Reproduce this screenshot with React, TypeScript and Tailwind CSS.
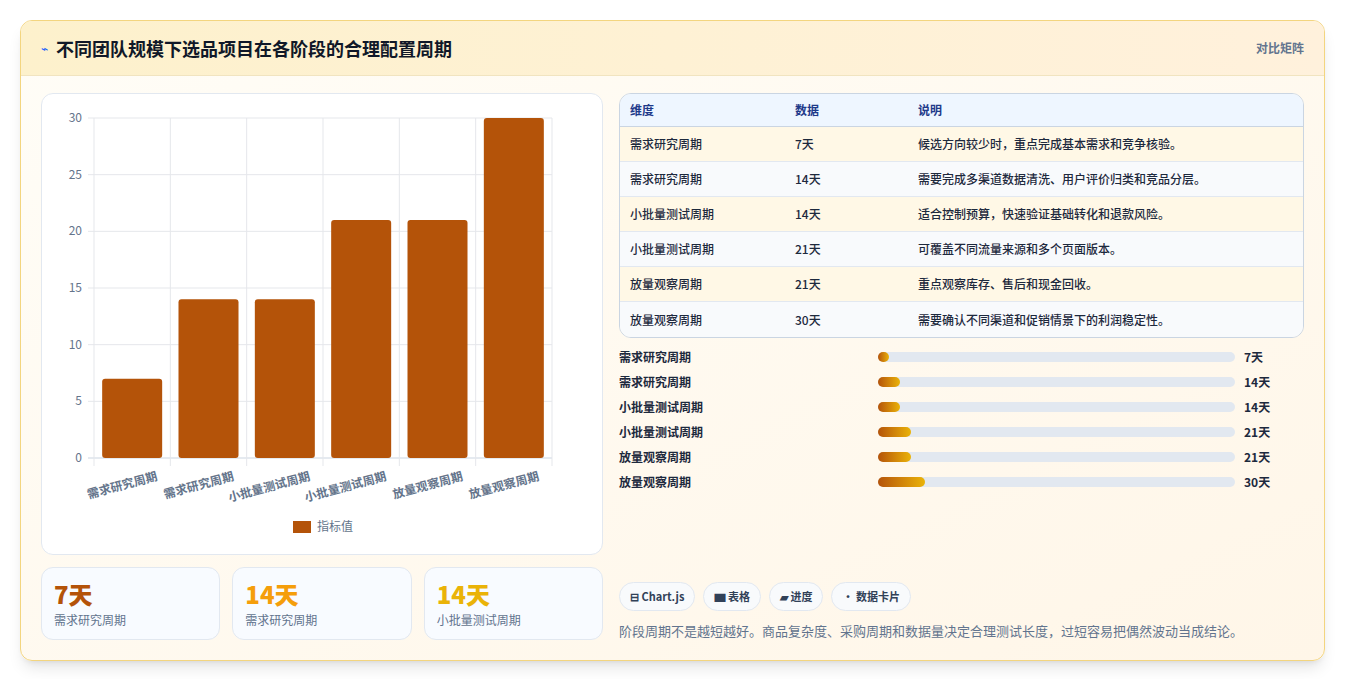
const ROWS = [
  { name: "需求研究周期", value: 7, note: "候选方向较少时，重点完成基本需求和竞争核验。" },
  { name: "需求研究周期", value: 14, note: "需要完成多渠道数据清洗、用户评价归类和竞品分层。" },
  { name: "小批量测试周期", value: 14, note: "适合控制预算，快速验证基础转化和退款风险。" },
  { name: "小批量测试周期", value: 21, note: "可覆盖不同流量来源和多个页面版本。" },
  { name: "放量观察周期", value: 21, note: "重点观察库存、售后和现金回收。" },
  { name: "放量观察周期", value: 30, note: "需要确认不同渠道和促销情景下的利润稳定性。" },
]

const FONT = { fontFamily: '"Noto Sans CJK SC", "Noto Sans", sans-serif' }

function BarChart() {
  const x0 = 52
  const x1 = 510
  const y0 = 364
  const y30 = 24
  const step = (x1 - x0) / 6
  const sy = (v: number) => y0 - ((y0 - y30) * v) / 30
  return (
    <svg width="560" height="460" style={FONT}>
      {[0, 5, 10, 15, 20, 25, 30].map((t) => (
        <g key={t}>
          <line x1={x0 - 6} x2={x1} y1={sy(t)} y2={sy(t)} stroke={t === 0 ? "#cbd5e1" : "#e5e7eb"} />
          <text x={x0 - 12} y={sy(t) + 4} textAnchor="end" fontSize="12" fill="#64748b">{t}</text>
        </g>
      ))}
      {Array.from({ length: 7 }).map((_, i) => (
        <line key={i} x1={x0 + i * step} x2={x0 + i * step} y1={y30} y2={y0 + 8} stroke="#e5e7eb" />
      ))}
      {ROWS.map((r, i) => {
        const cx = x0 + i * step + step / 2
        return (
          <g key={i}>
            <rect x={cx - 30} y={sy(r.value)} width="60" height={y0 - sy(r.value)} rx="3" fill="#b45309" />
            <text
              x={cx + 26}
              y={y0 + 22}
              textAnchor="end"
              fontSize="12"
              fontWeight="600"
              fill="#64748b"
              transform={`rotate(-15 ${cx + 26} ${y0 + 22})`}
            >
              {r.name}
            </text>
          </g>
        )
      })}
      <rect x="251" y="427" width="18" height="12" fill="#b45309" />
      <text x="275" y="437" fontSize="12" fill="#64748b">指标值</text>
    </svg>
  )
}

export default function App() {
  return (
    <div className="min-h-screen bg-white p-5" style={FONT}>
      <div className="overflow-hidden rounded-xl border border-[#f3d57f] bg-gradient-to-br from-[#fffdf7] to-[#fff6e8] shadow-lg">
        <div className="flex h-[55px] items-center justify-between border-b border-[#f1e4c0] bg-gradient-to-r from-[#fdf1cc] to-[#fff1dc] px-5">
          <div className="flex items-center gap-2">
            <span className="text-xs text-blue-600">⌁</span>
            <h1 className="text-lg font-bold text-gray-900">不同团队规模下选品项目在各阶段的合理配置周期</h1>
          </div>
          <span className="text-xs font-semibold text-slate-500">对比矩阵</span>
        </div>
        <div className="flex gap-4 px-5 pb-5 pt-[17px]">
          <div className="flex w-[562px] flex-col gap-3">
            <div className="h-[462px] overflow-hidden rounded-xl border border-slate-200 bg-white">
              <BarChart />
            </div>
            <div className="grid grid-cols-3 gap-3">
              {[
                { v: "7天", c: "text-[#b45309]", l: "需求研究周期" },
                { v: "14天", c: "text-[#f59e0b]", l: "需求研究周期" },
                { v: "14天", c: "text-[#eab308]", l: "小批量测试周期" },
              ].map((s, i) => (
                <div key={i} className="h-[73px] rounded-xl border border-slate-200 bg-[#f8fbff] px-3 pt-3">
                  <div className={`text-2xl font-extrabold leading-7 ${s.c}`}>{s.v}</div>
                  <div className="mt-1 text-xs text-slate-500">{s.l}</div>
                </div>
              ))}
            </div>
          </div>
          <div className="flex flex-1 flex-col">
            <div className="overflow-hidden rounded-xl border border-slate-300 text-xs text-slate-800">
              <div className="flex h-[33px] items-center border-b border-slate-300 bg-[#eef6ff] px-[10px] font-semibold text-[#1e3a8a]">
                <div className="w-[165px]">维度</div>
                <div className="w-[123px]">数据</div>
                <div>说明</div>
              </div>
              {ROWS.map((r, i) => (
                <div
                  key={i}
                  className={`flex h-[35px] items-center px-[10px] font-medium ${i < 5 ? "border-b border-slate-200" : ""} ${i % 2 === 0 ? "bg-[#fff8e6]" : "bg-[#f8fafc]"}`}
                >
                  <div className="w-[165px]">{r.name}</div>
                  <div className="w-[123px]">{r.value}天</div>
                  <div>{r.note}</div>
                </div>
              ))}
            </div>
            <div className="mt-[10px] flex flex-col gap-[7px]">
              {ROWS.map((r, i) => (
                <div key={i} className="flex h-[18px] items-center text-xs font-semibold text-slate-800">
                  <div className="w-[259px]">{r.name}</div>
                  <div className="h-[10px] w-[357px] rounded-full bg-[#e2e8f0]">
                    <div
                      className="h-full rounded-full bg-gradient-to-r from-[#b45309] to-[#eab308]"
                      style={{ width: `${(r.value / 230) * 100}%` }}
                    />
                  </div>
                  <div className="ml-[9px]">{r.value}天</div>
                </div>
              ))}
            </div>
            <div className="mt-auto">
              <div className="flex gap-2">
                {["⊟ Chart.js", "▆ 表格", "▰ 进度", "• 数据卡片"].map((c) => (
                  <span key={c} className="rounded-full border border-slate-200 bg-[#f8fafc] px-[10px] py-[5px] text-[11px] font-semibold text-slate-700">
                    {c}
                  </span>
                ))}
              </div>
              <p className="mt-[10px] text-[13px] text-slate-500">
                阶段周期不是越短越好。商品复杂度、采购周期和数据量决定合理测试长度，过短容易把偶然波动当成结论。
              </p>
            </div>
          </div>
        </div>
      </div>
    </div>
  )
}
